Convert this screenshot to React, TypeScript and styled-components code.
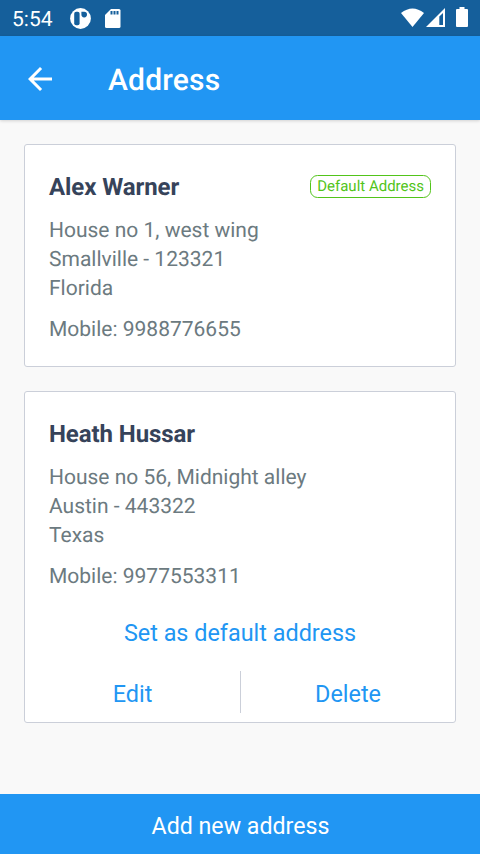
import React from "react";
import styled, { createGlobalStyle } from "styled-components";

const GlobalStyle = createGlobalStyle`
  * { box-sizing: border-box; }
  body {
    margin: 0;
    font-family: Roboto, sans-serif;
    background: #f9f9f9;
    text-rendering: geometricPrecision;
  }
  button { border: 0; padding: 0; background: none; font: inherit; color: inherit; }
`;

const Screen = styled.div`
  width: 100%;
  height: 854px;
  display: flex;
  flex-direction: column;
  overflow: hidden;
`;
const StatusBar = styled.div`
  height: 36px;
  flex: none;
  background: #155f9b;
  color: #fff;
  display: flex;
  align-items: center;
  padding: 0 12px;
`;
const Clock = styled.span`
  font-size: 21px;
  line-height: 36px;
  width: 57px;
  padding-top: 3px;
`;
const StatusIcon = styled.svg<{ $gap?: number }>`
  display: block;
  flex: none;
  margin-left: ${(p) => p.$gap ?? 0}px;
`;
const Spacer = styled.div`
  flex: 1;
`;
const Header = styled.header`
  height: 84px;
  flex: none;
  background: #2196f3;
  color: #fff;
  display: flex;
  align-items: center;
  padding: 2px 22px 0;
  box-shadow: 0 1px 3px rgba(0, 0, 0, 0.16);
`;
const BackButton = styled.button`
  width: 86px;
  height: 36px;
  svg { display: block; }
`;
const Title = styled.h1`
  margin: 0;
  padding-top: 4px;
  font-size: 30px;
  line-height: 36px;
  font-weight: 500;
  letter-spacing: 0.2px;
`;
const List = styled.main`
  flex: 1;
  padding: 24px;
  display: flex;
  flex-direction: column;
  gap: 24px;
`;
const Card = styled.section<{ $height: number }>`
  height: ${(p) => p.$height}px;
  background: #fff;
  border: 1px solid #cbcfd9;
  border-radius: 3px;
  padding: 24px 24px 0;
`;
const CardHead = styled.div`
  display: flex;
  justify-content: space-between;
  height: 36px;
`;
const Name = styled.h2`
  margin: 0;
  font-size: 24px;
  line-height: 36px;
  font-weight: 700;
  letter-spacing: -0.08px;
  color: #36435a;
`;
const Badge = styled.span`
  height: 23px;
  margin-top: 6px;
  padding: 0 6px;
  border: 1px solid #52c41a;
  border-radius: 7.5px;
  color: #52c41a;
  font-size: 15px;
  line-height: 21px;
`;
const Line = styled.p<{ $mobile?: boolean }>`
  margin: ${(p) => (p.$mobile ? 12 : 0)}px 0 0;
  font-size: 21px;
  line-height: 29px;
  color: #6c7a80;
`;
const Lines = styled.div`
  padding-top: 12px;
`;
const TextButton = styled.button`
  && {
    font-size: 23.4px;
    color: #2196f3;
  }
`;
const DefaultButton = styled(TextButton)`
  display: block;
  width: 100%;
  margin-top: 23px;
  height: 36px;
`;
const Actions = styled.div`
  display: grid;
  grid-template-columns: 1fr 1fr;
  margin: 20px -24px 0;
  height: 42px;
`;
const Action = styled(TextButton)`
  padding-top: 4px;
  & + & { border-left: 1px solid #cbcfd9; }
`;
const AddButton = styled.button`
  height: 60px;
  flex: none;
  padding: 4px 0 0 1px;
  && { background: #2196f3; color: #fff; font-size: 23.2px; }
`;

type Address = { name: string; lines: string[]; mobile: string; primary?: boolean };
const addresses: Address[] = [
  { name: "Alex Warner", lines: ["House no 1, west wing", "Smallville - 123321", "Florida"], mobile: "9988776655", primary: true },
  { name: "Heath Hussar", lines: ["House no 56, Midnight alley", "Austin - 443322", "Texas"], mobile: "9977553311" },
];

export default function App() {
  return (
    <Screen>
      <GlobalStyle />
      <StatusBar>
        <Clock>5:54</Clock>
        <StatusIcon $gap={1} width="22" height="22" viewBox="0 0 22 22">
          <circle cx="10.5" cy="11.5" r="10.4" fill="#fff" />
          <rect x="4.2" y="4.8" width="5.4" height="13.4" rx="2" fill="#155f9b" />
          <path d="M11.4 4.8H14.2A2.8 2.8 0 1 1 11.4 7.6Z" fill="#155f9b" />
        </StatusIcon>
        <StatusIcon $gap={12} width="18" height="20" viewBox="0 0 18 20">
          <path d="M7 1H15Q16.5 1 16.5 2.5V18.5Q16.5 20 15 20H2.5Q1 20 1 18.5V7Z" fill="#fff" />
          <path d="M7.5 3V6.5M10.5 3V6.5M13.5 3V6.5" stroke="#155f9b" strokeWidth="2" />
        </StatusIcon>
        <Spacer />
        <StatusIcon width="24" height="20" viewBox="0 0 24 20">
          <path d="M1 5Q12.5-4 24 5L12.5 19Z" fill="#fff" />
        </StatusIcon>
        <StatusIcon $gap={1} width="20" height="20" viewBox="0 0 20 20">
          <path fillRule="evenodd" d="M1 19L20 0V19ZM14.3 8.5V17H18V5Z" fill="#fff" />
        </StatusIcon>
        <StatusIcon $gap={11} width="12" height="22" viewBox="0 0 12 22">
          <path d="M3.5 0H8.5V2H11Q12 2 12 3V19Q12 20 11 20H1Q0 20 0 19V3Q0 2 1 2H3.5Z" fill="#fff" />
        </StatusIcon>
      </StatusBar>
      <Header>
        <BackButton aria-label="Back">
          <svg width="36" height="36" viewBox="0 0 24 24">
            <path d="M20 11H7.83l5.59-5.59L12 4l-8 8 8 8 1.41-1.41L7.83 13H20z" fill="#fff" />
          </svg>
        </BackButton>
        <Title>Address</Title>
      </Header>
      <List>
        {addresses.map((a) => (
          <Card key={a.name} $height={a.primary ? 223 : 332}>
            <CardHead>
              <Name>{a.name}</Name>
              {a.primary && <Badge>Default Address</Badge>}
            </CardHead>
            <Lines>
              {a.lines.map((l) => <Line key={l}>{l}</Line>)}
              <Line $mobile>Mobile: {a.mobile}</Line>
            </Lines>
            {!a.primary && (
              <>
                <DefaultButton>Set as default address</DefaultButton>
                <Actions>
                  <Action>Edit</Action>
                  <Action>Delete</Action>
                </Actions>
              </>
            )}
          </Card>
        ))}
      </List>
      <AddButton>Add new address</AddButton>
    </Screen>
  );
}
